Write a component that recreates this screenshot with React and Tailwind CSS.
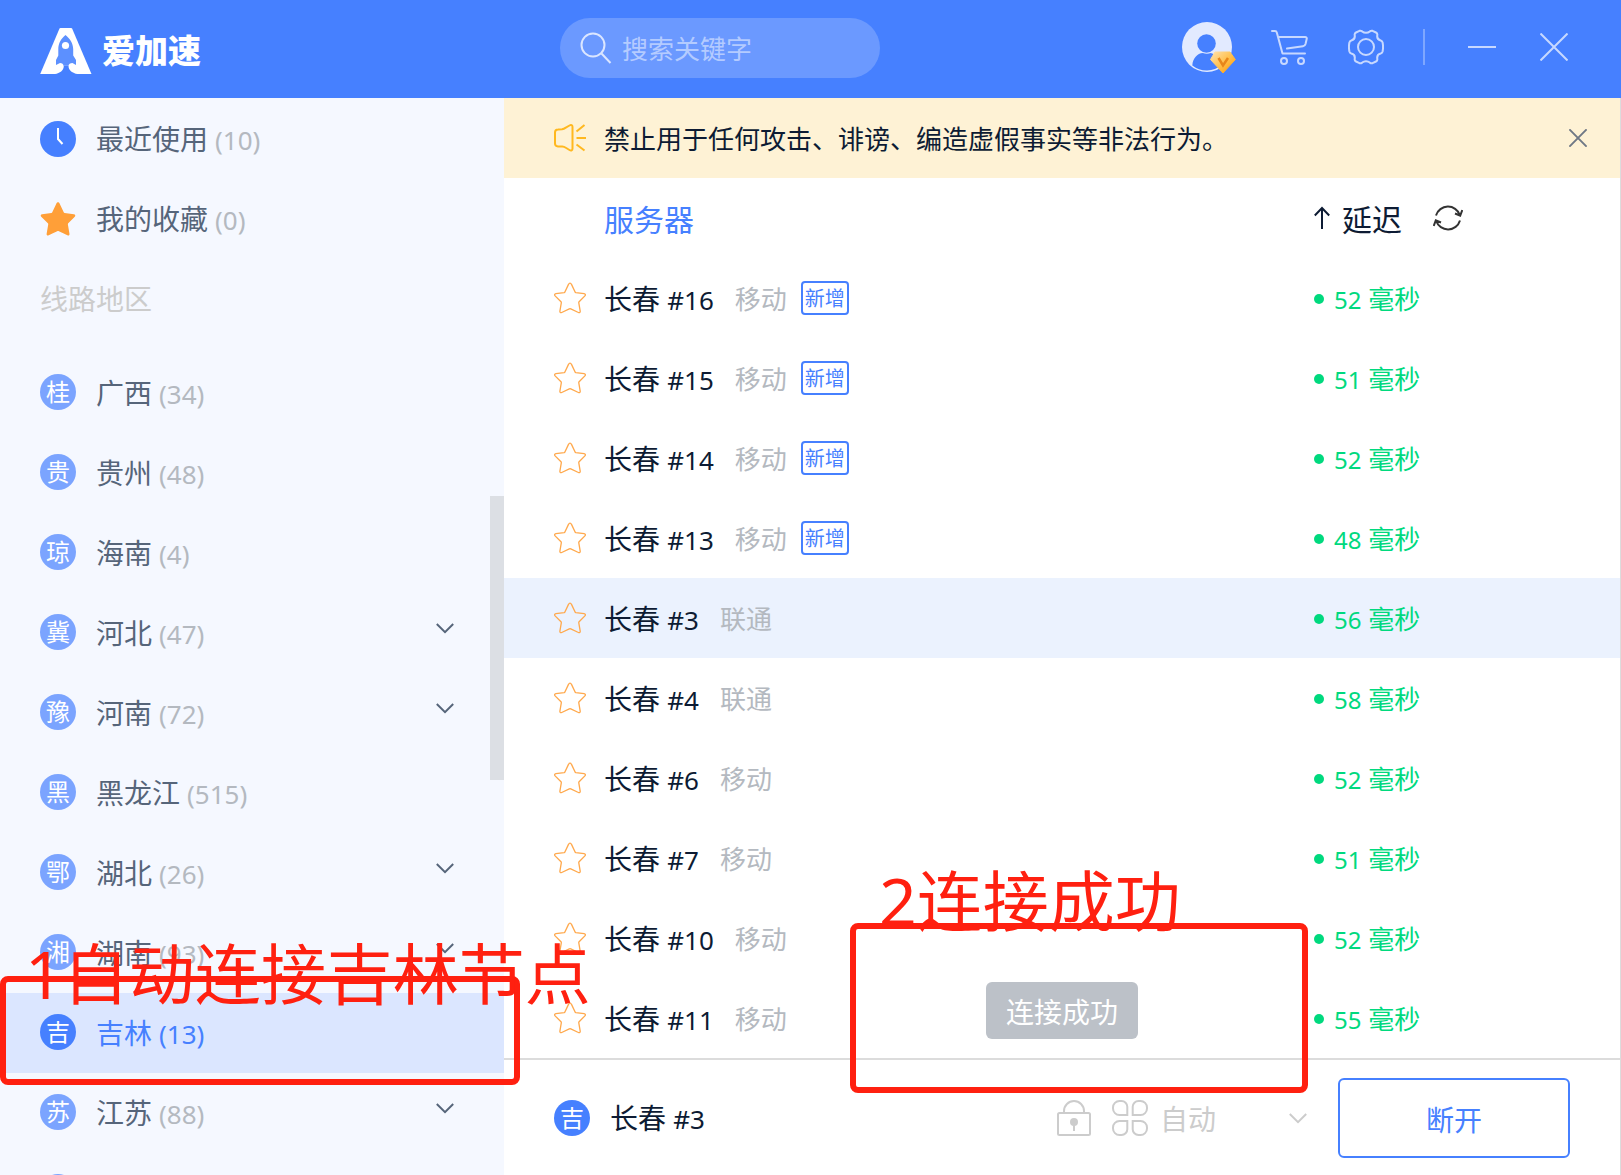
import React from "react";

const regions = [
  { badge: "桂", name: "广西", count: 34 },
  { badge: "贵", name: "贵州", count: 48 },
  { badge: "琼", name: "海南", count: 4 },
  { badge: "冀", name: "河北", count: 47, more: true },
  { badge: "豫", name: "河南", count: 72, more: true },
  { badge: "黑", name: "黑龙江", count: 515 },
  { badge: "鄂", name: "湖北", count: 26, more: true },
  { badge: "湘", name: "湖南", count: 93, more: true },
  { badge: "吉", name: "吉林", count: 13, active: true },
  { badge: "苏", name: "江苏", count: 88, more: true },
];

const servers = [
  { id: 16, isp: "移动", fresh: true, ms: 52 },
  { id: 15, isp: "移动", fresh: true, ms: 51 },
  { id: 14, isp: "移动", fresh: true, ms: 52 },
  { id: 13, isp: "移动", fresh: true, ms: 48 },
  { id: 3, isp: "联通", ms: 56, active: true },
  { id: 4, isp: "联通", ms: 58 },
  { id: 6, isp: "移动", ms: 52 },
  { id: 7, isp: "移动", ms: 51 },
  { id: 10, isp: "移动", ms: 52 },
  { id: 11, isp: "移动", ms: 55 },
];

const STAR =
  "M16 1.200c.7 0 1.200.5 1.500 1.200l3.600 7.600c.1.3.4.5.8.6l8.200 1.100c1.300.200 1.700 1.300.800 2.200l-5.800 5.900c-.3.300-.4.600-.3 1l1.400 8.300c.200 1.300-.7 1.900-1.800 1.400l-7.600-3.600c-.5-.2-1-.2-1.500 0l-7.600 3.600c-1.100.5-2-.1-1.800-1.400l1.400-8.300c.1-.4 0-.7-.3-1L1.100 13.900C.2 13 .6 11.900 1.900 11.700l8.200-1.100c.4-.1.700-.3.800-.6l3.600-7.600c.3-.7.800-1.200 1.500-1.200z";

function Logo() {
  return (
    <svg className="h-[46px] w-[52px]" viewBox="0 0 52 46" aria-hidden="true">
      <path d="M20.500 0h10.600q.8 0 1.100.7L51.500 46H.2L19.400.7q.3-.7 1.100-.7z" fill="#fff" />
      <path
        d="M25.500 7c4.500 3.600 7.600 8.500 7.700 14v6.500l2.800 4.500v5l-3.500-2c-2.200.2-4 1-4 2.800H23.500c0-1.800-1.500-2.600-3.500-2.800l-4 2v-5l2.300-4.500V21c.1-5.500 2.700-10.400 7.200-14z"
        fill="#5c90ff"
      />
      <path d="M15 46c4.800-.5 8.800-3.600 8.800-8.200h4.700c0 4.600 4.200 7.700 9 8.200z" fill="#4680ff" />
      <circle cx="25.500" cy="17.500" r="3.600" fill="#fff" />
    </svg>
  );
}

function Star() {
  return (
    <svg className="h-[32px] w-8" viewBox="0 0 32 32" fill="none" stroke="#ffa94d" strokeWidth="1.3" aria-hidden="true">
      <path d={STAR} />
    </svg>
  );
}

function Chevron({ className }) {
  return (
    <svg className={className} viewBox="0 0 18 11" fill="none" stroke="currentColor" strokeWidth="2" aria-hidden="true">
      <path d="M.8 1l8.200 8.200L17.200 1" />
    </svg>
  );
}

function Cross({ className, width }) {
  return (
    <svg className={className} viewBox="0 0 28 28" fill="none" stroke="currentColor" strokeWidth={width} aria-hidden="true">
      <path d="M.5.5l27 27M27.500.5l-27 27" />
    </svg>
  );
}

function Count({ children, active }) {
  return <span className={active ? "ml-[7px] text-[26px]" : "ml-[7px] text-[26px] text-[#b4b9c0]"}>({children})</span>;
}

function Header() {
  return (
    <header className="flex h-[98px] shrink-0 items-center bg-[#4680ff]">
      <div className="flex w-[560px] shrink-0 items-center gap-[10px] pl-10 pt-1">
        <Logo />
        <h1 className="text-[33px] font-black leading-10 text-white">爱加速</h1>
      </div>
      <label className="mb-[2px] flex h-[60px] w-80 items-center gap-[10px] rounded-full bg-[#6b99ff] pl-5">
        <svg className="size-8 shrink-0" viewBox="0 0 32 32" fill="none" stroke="#dbe6ff" strokeWidth="2" aria-hidden="true">
          <circle cx="13" cy="13" r="11.500" />
          <path d="M21.500 21.500l9 9.500" />
        </svg>
        <input
          type="text"
          aria-label="搜索关键字"
          placeholder="搜索关键字"
          className="w-full min-w-0 bg-transparent pr-6 pt-[3px] text-[26px] text-white outline-none placeholder:text-[#b4cbff]"
        />
      </label>
      <div className="ml-auto flex items-center pb-1 pr-[53px] text-[#c7d8ff]">
        <button type="button" aria-label="账户" className="mr-[35px]">
          <svg className="h-[54px] w-[54px]" viewBox="0 0 54 54" aria-hidden="true">
            <defs>
              <linearGradient id="gem" x1="0" y1="0" x2="1" y2="1">
                <stop offset="0" stopColor="#ffe3b0" />
                <stop offset=".5" stopColor="#ffc14f" />
                <stop offset="1" stopColor="#ff9500" />
              </linearGradient>
            </defs>
            <circle cx="25" cy="27" r="25" fill="#e2eaff" />
            <circle cx="24.500" cy="23.500" r="9.300" fill="#4680ff" />
            <path d="M10.300 45.500c.5-7.500 5-12 10.500-12.500 2.500 1 5.500 1 8 0 5.500 1.500 10.500 5 11 12A23.500 23.500 0 0 1 10.300 45.500z" fill="#4680ff" />
            <path d="M33 32h15l5.300 7.500L41 53 28.500 39.500z" fill="url(#gem)" stroke="url(#gem)" strokeLinejoin="round" />
            <path d="M36.500 38l4.500 7.500 5-7.500" fill="none" stroke="#e8861a" strokeWidth="2.500" />
          </svg>
        </button>
        <button type="button" aria-label="购物车" className="mr-10">
          <svg className="h-9 w-[37px]" viewBox="0 0 37 36" fill="none" stroke="currentColor" strokeWidth="2" strokeLinecap="round" strokeLinejoin="round" aria-hidden="true">
            <path d="M1 2h3c1 0 1.500.5 1.800 1.500L11.500 24.500H34" />
            <path d="M8 8h26c1.500 0 2 .8 1.700 2l-1.200 5c-.4 1.500-1 2-2.500 2.200L16 19.500" />
            <circle cx="13" cy="32" r="3" />
            <circle cx="30" cy="32" r="3" />
          </svg>
        </button>
        <button type="button" aria-label="设置" className="mr-[39px]">
          <svg className="size-9" viewBox="0 0 36 36" fill="none" stroke="currentColor" strokeWidth="2" strokeLinejoin="round" aria-hidden="true">
            <path d="M11.500 1.800c1-.4 1.800-.1 2.700.6 1.100.9 2.300 1.300 3.800 1.300s2.700-.4 3.800-1.300c.9-.7 1.700-1 2.700-.6l3.500 1.700c1.200.6 1.500 1.500 1.300 2.700-.5 2.900.7 4.700 3.400 5.300 1.100.3 1.600.9 1.900 2 .6 3 .6 6 0 9-.3 1.100-.8 1.700-1.900 2-2.700.6-3.900 2.400-3.400 5.300.2 1.200-.1 2.100-1.300 2.700l-3.500 1.700c-1 .4-1.800.1-2.700-.6-1.100-.9-2.300-1.300-3.800-1.300s-2.700.4-3.800 1.300c-.9.7-1.700 1-2.700.6L8 32.500c-1.200-.6-1.500-1.500-1.300-2.700.5-2.900-.7-4.700-3.400-5.300-1.100-.3-1.600-.9-1.900-2-.6-3-.6-6 0-9 .3-1.100.8-1.700 1.900-2 2.700-.6 3.900-2.400 3.400-5.300C6.500 5 6.800 4.100 8 3.500z" />
            <circle cx="18" cy="18" r="8" />
          </svg>
        </button>
        <span className="mr-[43px] h-9 w-[2px] bg-[#7ea7ff]" />
        <button type="button" aria-label="最小化" className="mr-11 flex h-7 w-7 items-center">
          <span className="h-[2px] w-full bg-[#c7d8ff]" />
        </button>
        <button type="button" aria-label="关闭">
          <Cross className="size-7" width="2" />
        </button>
      </div>
    </header>
  );
}

function RegionBadge({ children, active }) {
  return (
    <span
      className={
        active
          ? "flex size-9 shrink-0 items-center justify-center rounded-full bg-[#4680ff] text-[24px] leading-none text-white"
          : "flex size-9 shrink-0 items-center justify-center rounded-full bg-[#7ba4ff] text-[24px] leading-none text-white"
      }
    >
      {children}
    </span>
  );
}

function Sidebar() {
  return (
    <aside className="relative w-[504px] shrink-0 overflow-hidden bg-[#f5f8ff] text-[28px] text-[#56657a]">
      <button type="button" className="flex h-20 w-full items-center gap-5 pl-10 pt-[2px]">
        <svg className="size-9 shrink-0" viewBox="0 0 36 36" aria-hidden="true">
          <circle cx="18" cy="18" r="18" fill="#4680ff" />
          <path d="M18 7v11l4.500 5" fill="none" stroke="#fff" strokeWidth="2" />
        </svg>
        <span>
          最近使用<Count>10</Count>
        </span>
      </button>
      <button type="button" className="flex h-20 w-full items-center gap-5 pl-10 pt-[2px]">
        <svg className="size-9 shrink-0" viewBox="0 0 32 32" fill="#ff9f38" aria-hidden="true">
          <path d={STAR} />
        </svg>
        <span>
          我的收藏<Count>0</Count>
        </span>
      </button>
      <h2 className="mb-[15px] flex h-20 items-center pl-10 pt-[2px] text-[#cccccc]">线路地区</h2>
      <nav aria-label="线路地区">
        {regions.map((r) => (
          <button
            key={r.name}
            type="button"
            className={
              r.active
                ? "flex h-20 w-full items-center gap-5 bg-[#dbe6ff] pb-[2px] pl-10 pr-[50px] text-[#4680ff]"
                : "flex h-20 w-full items-center gap-5 pb-[2px] pl-10 pr-[50px]"
            }
          >
            <RegionBadge active={r.active}>{r.badge}</RegionBadge>
            <span className="pt-[2px]">
              {r.name}
              <Count active={r.active}>{r.count}</Count>
            </span>
            {r.more && <Chevron className="mb-2 ml-auto h-[11px] w-[18px]" />}
          </button>
        ))}
        <div className="flex h-20 items-center pb-[2px] pl-10">
          <RegionBadge />
        </div>
      </nav>
      <div className="absolute right-0 top-[398px] h-[284px] w-[14px] bg-[#dcdfe4]" />
    </aside>
  );
}

function Notice() {
  return (
    <div className="flex h-20 shrink-0 items-center bg-[#fef2d5] pl-[50px] pr-[33px]">
      <svg className="mr-[18px] h-7 w-8 shrink-0" viewBox="0 0 32 28" fill="none" stroke="#ffb81f" strokeWidth="2" strokeLinejoin="round" aria-hidden="true">
        <path d="M4 5.500l4-.3c1.500-.2 2.500-.7 3.800-1.600L15.500 1.500c1.700-1 3-.3 3 1.500v21.500c0 1.800-1.300 2.500-3 1.500l-3.300-2c-1.500-.9-2.500-1.300-4-1.400L4 22.500c-2-.2-3-1.300-3-3v-11c0-1.700 1-2.900 3-3z" />
        <path d="M22.500 7.500L30.500 1M22.500 14h9.500M22.500 20.500l8 6" />
      </svg>
      <p className="pt-[3px] text-[26px] text-[#0d1b33]">禁止用于任何攻击、诽谤、编造虚假事实等非法行为。</p>
      <button type="button" aria-label="关闭公告" className="ml-auto text-[#6f7885]">
        <Cross className="size-[18px]" width="3" />
      </button>
    </div>
  );
}

function ServerTable() {
  return (
    <table className="w-full table-fixed border-collapse text-left text-[#0d1b33]">
      <thead>
        <tr className="h-20 text-[30px]">
          <th className="w-[100px] p-0" aria-label="收藏" />
          <th className="p-0 pt-[2px] font-normal text-[#4680ff]">服务器</th>
          <th className="w-[306px] p-0 font-normal">
            <div className="flex items-center">
              <svg className="mr-3 h-6 w-4" viewBox="0 0 16 24" fill="none" stroke="currentColor" strokeWidth="2" aria-hidden="true">
                <path d="M8 1.500V23M.8 9.500L8 2l7.200 7.500" />
              </svg>
              <button type="button" className="pt-[2px]">
                延迟
              </button>
              <button type="button" aria-label="刷新" className="ml-[31px]">
                <svg className="h-7 w-[30px]" viewBox="0 0 30 28" fill="none" stroke="#333" strokeWidth="2" aria-hidden="true">
                  <path d="M3 11.500A12.500 12.500 0 0 1 26.800 11M22 9.500l5.200 2.200L29.300 6" />
                  <path d="M27 16.500A12.500 12.500 0 0 1 3.200 17M8 18.500l-5.200-2.200L.7 22" />
                </svg>
              </button>
            </div>
          </th>
        </tr>
      </thead>
      <tbody>
        {servers.map((s) => (
          <tr key={s.id} className={s.active ? "h-20 bg-[#ebf2fe]" : "h-20"}>
            <td className="p-0 pl-[50px]">
              <button type="button" aria-label="收藏" className="block">
                <Star />
              </button>
            </td>
            <td className="p-0">
              <div className="flex items-center">
                <span className="pt-[2px] text-[28px]">
                  长春 <span className="text-[26px]">#{s.id}</span>
                </span>
                <span className="ml-[21px] pt-[2px] text-[26px] text-[#b4b9c0]">{s.isp}</span>
                {s.fresh && (
                  <span className="ml-[14px] flex h-[34px] w-12 items-center justify-center rounded border-2 border-[#4680ff] pt-[2px] text-[20px] leading-none text-[#4680ff]">
                    新增
                  </span>
                )}
              </div>
            </td>
            <td className="p-0">
              <div className="flex items-center pt-[2px] text-[26px] text-[#00d97e]">
                <span className="mr-[10px] size-[10px] rounded-full bg-[#00d97e]" />
                <span>
                  <span className="text-[24px]">{s.ms}</span> 毫秒
                </span>
              </div>
            </td>
          </tr>
        ))}
      </tbody>
    </table>
  );
}

function Footer() {
  return (
    <footer className="flex min-h-[117px] shrink-0 items-center border-t-2 border-[#dcdcdc] bg-white pl-[50px] pr-[50px] text-[28px] text-[#0d1b33]">
      <RegionBadge active>吉</RegionBadge>
      <span className="ml-5">
        长春 <span className="text-[26px]">#3</span>
      </span>
      <div className="ml-auto flex items-center text-[#cccccc]">
        <button type="button" aria-label="锁定" className="mr-5">
          <svg className="size-9" viewBox="0 0 36 36" fill="none" stroke="currentColor" strokeWidth="2" aria-hidden="true">
            <rect x="2" y="13" width="32" height="22" rx="1.500" />
            <path d="M8 13v-2a10 10 0 0 1 20 0v2" />
            <circle cx="18" cy="22" r="4" fill="currentColor" stroke="none" />
            <path d="M18 24v7" />
          </svg>
        </button>
        <svg className="mr-3 size-9" viewBox="0 0 36 36" fill="none" stroke="currentColor" strokeWidth="2" aria-hidden="true">
          <path d="M7.500 1h2a5.800 5.800 0 0 1 5.800 5.800V15H7.500A6.500 6.500 0 0 1 1 8.500v-1A6.500 6.500 0 0 1 7.500 1z" />
          <path d="M28.500 1h-2a5.800 5.800 0 0 0-5.800 5.800V15h7.800A6.500 6.500 0 0 0 35 8.500v-1A6.500 6.500 0 0 0 28.500 1z" />
          <path d="M7.500 35h2a5.800 5.800 0 0 0 5.800-5.800V21H7.500A6.500 6.500 0 0 0 1 27.500v1A6.500 6.500 0 0 0 7.500 35z" />
          <path d="M28.500 35h-2a5.800 5.800 0 0 1-5.800-5.800V21h7.800a6.500 6.500 0 0 1 6.500 6.500v1a6.500 6.500 0 0 1-6.500 6.500z" />
        </svg>
        <div className="relative mr-[31px] flex items-center pt-[2px]">
          <select aria-label="连接模式" className="w-[147px] appearance-none bg-transparent text-[28px] text-[#cccccc] outline-none">
            <option>自动</option>
          </select>
          <Chevron className="pointer-events-none absolute right-0 h-[11px] w-[18px]" />
        </div>
      </div>
      <button type="button" className="h-20 w-[232px] rounded-md border-2 border-[#4680ff] pt-1 text-[#4680ff]">
        断开
      </button>
    </footer>
  );
}

export default function App() {
  return (
    <div className="relative flex h-screen flex-col overflow-hidden bg-white font-['Noto_Sans','Noto_Sans_CJK_SC',sans-serif]">
      <Header />
      <div className="flex min-h-0 flex-1 border-r border-[#dcdcdc]">
        <Sidebar />
        <main className="relative flex min-w-0 flex-1 flex-col">
          <Notice />
          <div className="min-h-0 flex-1 overflow-hidden">
            <ServerTable />
          </div>
          <Footer />
          <div role="status" className="absolute bottom-[136px] left-1/2 flex h-[57px] w-[152px] -translate-x-1/2 items-center justify-center rounded-md bg-[#bcc1c8] pt-[2px] text-[28px] text-white">
            连接成功
          </div>
        </main>
      </div>

      <div className="pointer-events-none absolute left-0 top-[976px] h-[109px] w-[520px] rounded-lg border-[6px] border-[#ff2010]" />
      <p className="pointer-events-none absolute left-[25px] top-[933px] whitespace-nowrap text-[66px] leading-[80px] text-[#ff2010]">
        1自动连接吉林节点
      </p>
      <div className="pointer-events-none absolute left-[850px] top-[923px] h-[170px] w-[458px] rounded-lg border-[6px] border-[#ff2010]" />
      <p className="pointer-events-none absolute left-[879px] top-[860px] whitespace-nowrap text-[66px] leading-[80px] text-[#ff2010]">
        2连接成功
      </p>
    </div>
  );
}
